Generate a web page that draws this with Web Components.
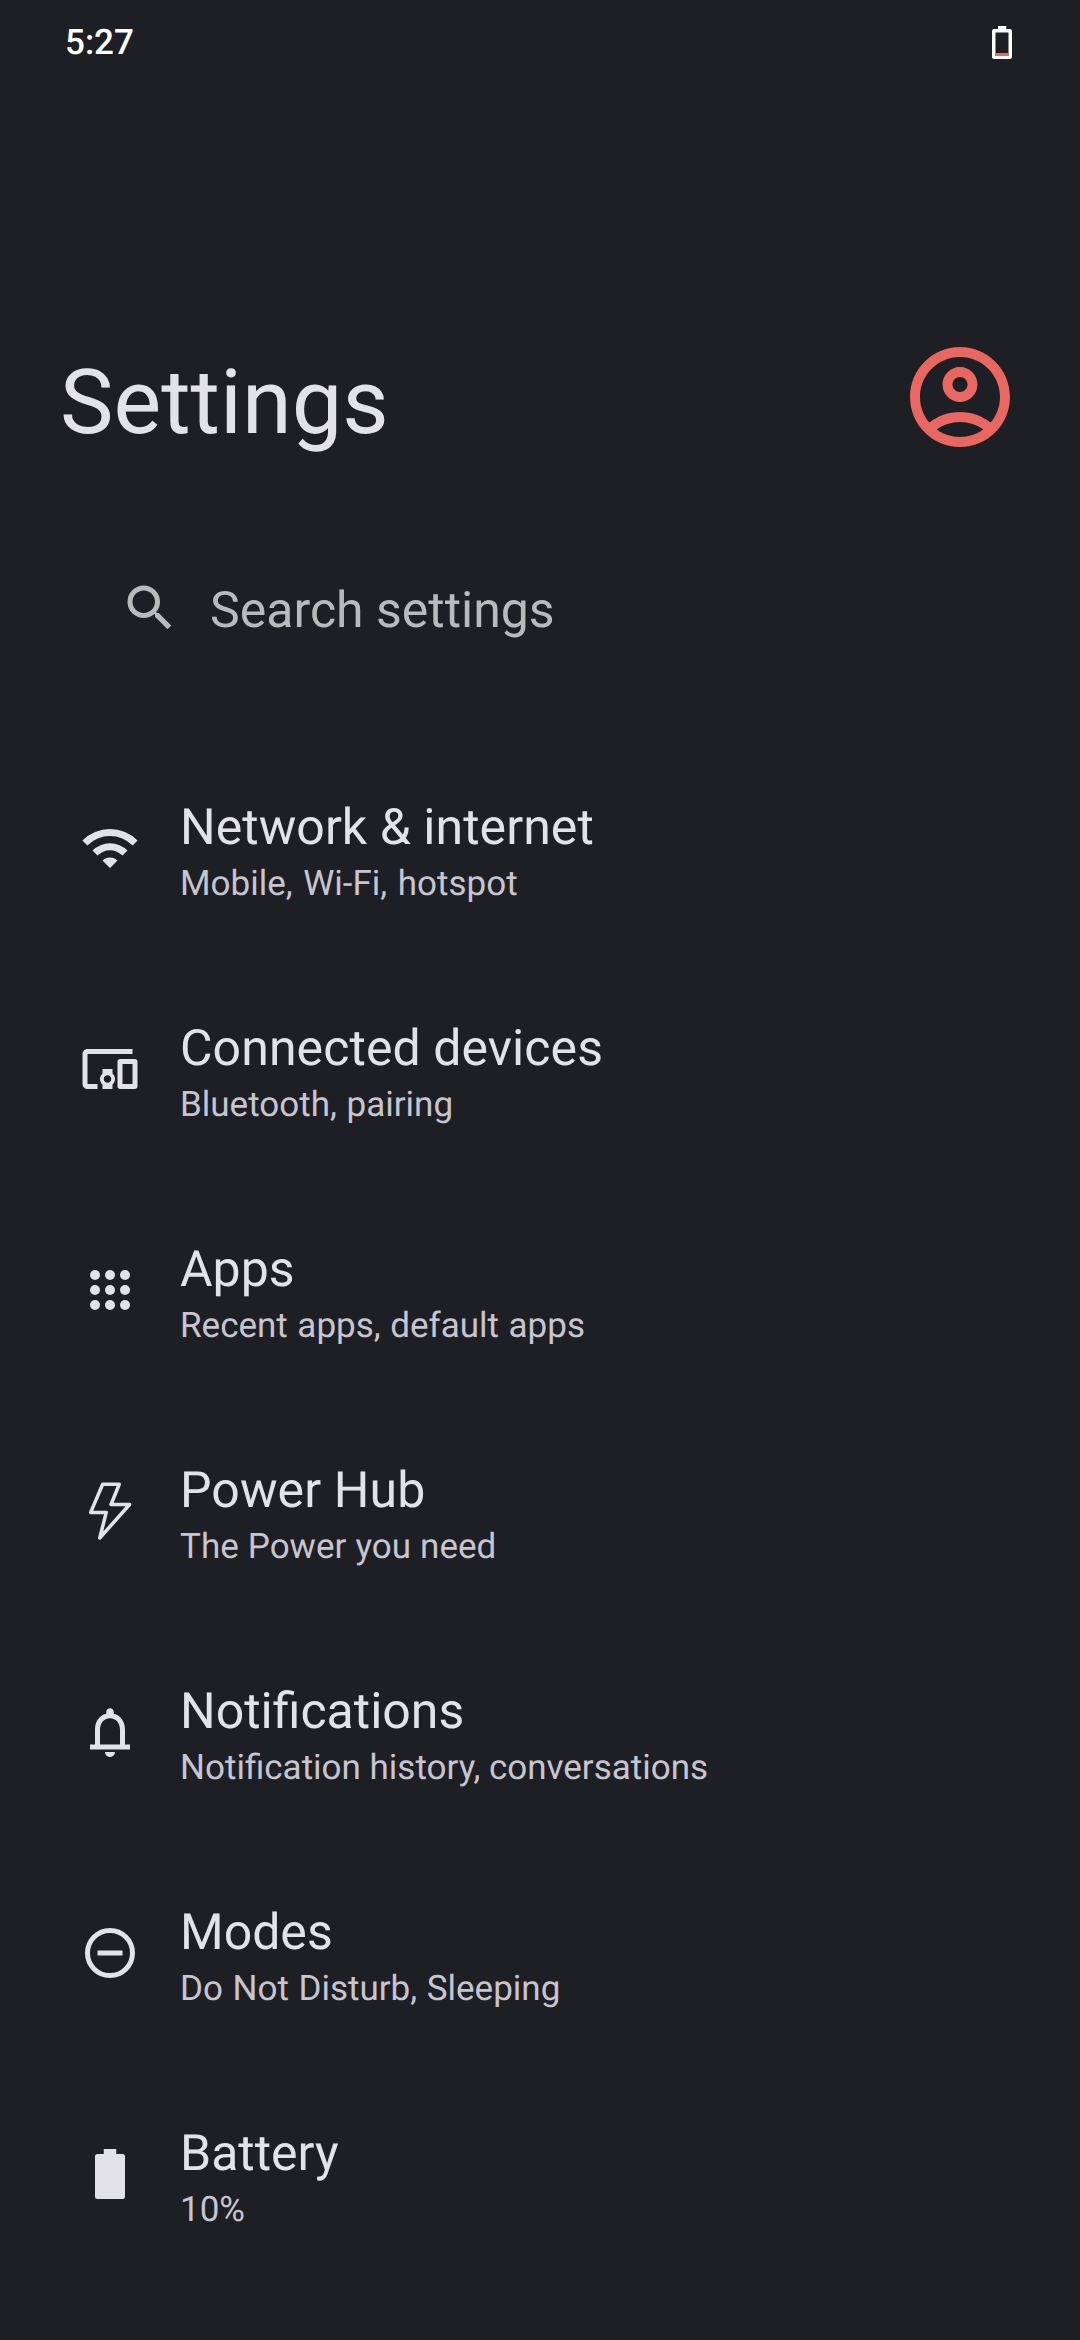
<!DOCTYPE html>
<html lang="en">
<head>
<meta charset="utf-8">
<title>Settings</title>
<style>
html,body{margin:0;background:#1e1f25}
body{width:1080px;height:2340px;overflow:hidden;font-family:Roboto,"Liberation Sans",sans-serif;color:#e2e2e7;text-rendering:geometricPrecision}
</style>
</head>
<body>
<settings-screen></settings-screen>
<script>
const ICONS = {
  wifi: '<path d="M.97 8.97A15.6 15.6 0 0 1 23.03 8.97L21.05 10.95A12.8 12.8 0 0 0 2.95 10.95ZM5 13A9.9 9.9 0 0 1 19 13L17 15A7.07 7.07 0 0 0 7 15ZM9 17A4.24 4.24 0 0 1 15 17L12 20Z"/>',
  devices: '<path d="M3 6h18V4H3C1.9 4 1 4.9 1 6v12c0 1.1.9 2 2 2h4v-2H3V6zm10 6H9v1.78c-.61.55-1 1.33-1 2.22s.39 1.67 1 2.22V20h4v-1.78c.61-.55 1-1.34 1-2.22s-.39-1.67-1-2.22V12zm-2 5.5c-.83 0-1.5-.67-1.5-1.5s.67-1.5 1.5-1.5 1.5.67 1.5 1.5-.67 1.5-1.5 1.5zM22 8h-6c-.5 0-1 .5-1 1v10c0 .5.5 1 1 1h6c.5 0 1-.5 1-1V9c0-.5-.5-1-1-1zm-1 10h-4v-8h4v8z"/>',
  apps: [6,12,18].map(y => [6,12,18].map(x => `<circle cx="${x}" cy="${y}" r="2"/>`).join('')).join(''),
  power: '<path fill="none" stroke="currentColor" stroke-width="1.4" stroke-linejoin="round" d="M9.07 1.3H15.7L12.4 9.4H19.85L7.9 22.8L10.5 12.55H4.27Z"/>',
  bell: '<path d="M18 17v-6c0-3.07-1.63-5.64-4.5-6.32V4c0-.83-.67-1.5-1.5-1.5s-1.5.67-1.5 1.5v.68C7.64 5.36 6 7.92 6 11v6H4v2h16v-2h-2zm-2 0H8v-6c0-2.48 1.51-4.5 4-4.5s4 2.02 4 4.5v6zm-4 5c1.1 0 2-.9 2-2h-4c0 1.1.9 2 2 2z"/>',
  modes: '<circle cx="12" cy="12" r="9" fill="none" stroke="currentColor" stroke-width="2"/><path d="M7 11h10v2H7z"/>',
  battery: '<path d="M9.5 2h5v2H17a1 1 0 0 1 1 1v16a1 1 0 0 1-1 1H7a1 1 0 0 1-1-1V5a1 1 0 0 1 1-1h2.5z"/>',
  search: '<path d="M15.5 14h-.79l-.28-.27A6.47 6.47 0 0 0 16 9.5 6.5 6.5 0 1 0 9.5 16c1.61 0 3.09-.59 4.23-1.57l.27.28v.79l5 4.99L20.49 19l-4.99-5zm-6 0C7.01 14 5 11.99 5 9.5S7.01 5 9.5 5 14 7.01 14 9.5 11.99 14 9.5 14z"/>',
  account: '<path fill-rule="evenodd" d="M12 2C6.48 2 2 6.48 2 12s4.48 10 10 10 10-4.48 10-10S17.52 2 12 2zM7.35 18.5C8.66 17.56 10.26 17 12 17s3.34.56 4.65 1.5C15.34 19.44 13.74 20 12 20s-3.34-.56-4.65-1.5zM18.14 17.12C16.45 15.8 14.32 15 12 15s-4.45.8-6.14 2.12C4.7 15.73 4 13.95 4 12c0-4.42 3.58-8 8-8s8 3.58 8 8c0 1.95-.7 3.73-1.86 5.12z"/><path fill-rule="evenodd" d="M12 6c-1.93 0-3.5 1.57-3.5 3.5S10.07 13 12 13s3.5-1.57 3.5-3.5S13.93 6 12 6zm0 5c-.83 0-1.5-.67-1.5-1.5S11.17 8 12 8s1.5.67 1.5 1.5S12.83 11 12 11z"/>'
};

class UiIcon extends HTMLElement {
  connectedCallback() {
    this.attachShadow({mode:'open'}).innerHTML = `
      <style>:host{display:block;flex:none;width:60px;height:60px}svg{display:block;width:100%;height:100%;fill:currentColor}</style>
      <svg viewBox="0 0 24 24">${ICONS[this.getAttribute('name')]}</svg>`;
  }
}
customElements.define('ui-icon', UiIcon);

class StatusBar extends HTMLElement {
  connectedCallback() {
    this.attachShadow({mode:'open'}).innerHTML = `
      <style>
        :host{display:flex;justify-content:space-between;align-items:center;box-sizing:border-box;height:85px;padding:0 68px 0 65px;color:#fff}
        .clock{font-size:35px;font-weight:500;line-height:42px}
        svg{display:block;width:20px;height:33px}
      </style>
      <span class="clock"><slot></slot></span>
      <svg viewBox="0 0 20 33"><path fill="#fff" fill-rule="evenodd" d="M6 0h8.3v3H18a2 2 0 0 1 2 2v26a2 2 0 0 1-2 2H2a2 2 0 0 1-2-2V5a2 2 0 0 1 2-2h4zM3.5 6.5V30h13V6.5z"/><path fill="#ef675f" d="M3.5 27h13v3h-13z"/></svg>`;
  }
}
customElements.define('status-bar', StatusBar);

class PageHeader extends HTMLElement {
  connectedCallback() {
    this.attachShadow({mode:'open'}).innerHTML = `
      <style>
        :host{display:flex;justify-content:space-between;align-items:center;height:120px;padding:252px 60px 0 60px}
        h1{margin:12px 0 0;font-size:90px;font-weight:400;line-height:106px}
        ui-icon{width:120px;height:120px;color:#e86861}
      </style>
      <h1><slot></slot></h1><ui-icon name="account"></ui-icon>`;
  }
}
customElements.define('page-header', PageHeader);

class SearchBar extends HTMLElement {
  connectedCallback() {
    this.attachShadow({mode:'open'}).innerHTML = `
      <style>
        :host{display:flex;align-items:center;gap:30px;height:60px;padding:121px 60px 99px 120px;color:#b9babc}
        span{font-size:50px;line-height:60px;margin-top:6px}
      </style>
      <ui-icon name="search"></ui-icon><span><slot></slot></span>`;
  }
}
customElements.define('search-bar', SearchBar);

class SettingsRow extends HTMLElement {
  connectedCallback() {
    this.attachShadow({mode:'open'}).innerHTML = `
      <style>
        :host{display:flex;align-items:flex-start;gap:40px;box-sizing:border-box;height:221px;padding:61px 60px 0 80px}
        ui-icon{margin-top:20px}
        .text{display:flex;flex-direction:column;gap:5px}
        .title{font-size:50px;line-height:60px;letter-spacing:var(--title-tracking,0)}
        .summary{font-size:35px;line-height:42px;color:#c6c5d0;word-spacing:var(--summary-gap,0)}
      </style>
      <ui-icon name="${this.getAttribute('icon')}"></ui-icon>
      <div class="text"><span class="title"><slot></slot></span><span class="summary"><slot name="summary"></slot></span></div>`;
  }
}
customElements.define('settings-row', SettingsRow);

class SettingsScreen extends HTMLElement {
  connectedCallback() {
    this.attachShadow({mode:'open'}).innerHTML = `
      <style>
        :host{display:flex;flex-direction:column;width:1080px;height:2340px;background:#1e1f25;overflow:hidden}
        status-bar,page-header,search-bar,settings-row{flex:none}
        [icon=wifi]{--summary-gap:1.9px;--title-tracking:.05px}
        [icon=devices]{--summary-gap:1px;--title-tracking:.08px}
        [icon=apps],[icon=modes]{--summary-gap:.9px}
        [icon=power]{--summary-gap:.4px;--title-tracking:.1px}
      </style>
      <status-bar>5:27</status-bar>
      <page-header>Settings</page-header>
      <search-bar>Search settings</search-bar>
      <settings-row icon="wifi">Network &amp; internet<span slot="summary">Mobile, Wi-Fi, hotspot</span></settings-row>
      <settings-row icon="devices">Connected devices<span slot="summary">Bluetooth, pairing</span></settings-row>
      <settings-row icon="apps">Apps<span slot="summary">Recent apps, default apps</span></settings-row>
      <settings-row icon="power">Power Hub<span slot="summary">The Power you need</span></settings-row>
      <settings-row icon="bell">Notifications<span slot="summary">Notification history, conversations</span></settings-row>
      <settings-row icon="modes">Modes<span slot="summary">Do Not Disturb, Sleeping</span></settings-row>
      <settings-row icon="battery">Battery<span slot="summary">10%</span></settings-row>`;
  }
}
customElements.define('settings-screen', SettingsScreen);
</script>
</body>
</html>
